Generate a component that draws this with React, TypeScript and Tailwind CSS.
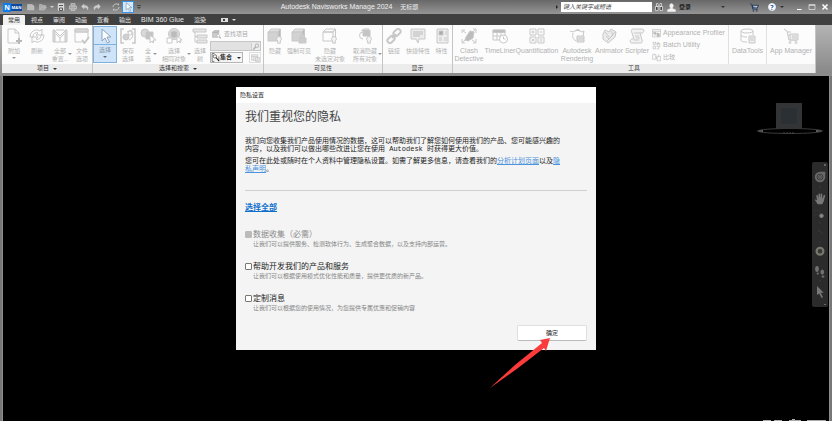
import React, { useState } from 'react';

type Glyph = React.ReactNode;

function Icon({ children, className = 'size-4' }: { children: Glyph; className?: string }) {
  return (
    <svg viewBox="0 0 16 16" className={`shrink-0 ${className}`} fill="none" stroke="currentColor" strokeWidth="1" aria-hidden="true">
      {children}
    </svg>
  );
}

const bulb = <path d="M12 8.5a2.4 2.4 0 0 1 1.3 4.4v2.3h-2.6v-2.3A2.4 2.4 0 0 1 12 8.5z" fill="#f4f4f4" />;
const cube = (
  <>
    <path d="M1 4l3-3h9.500l-2.500 3z" fill="#e2e2e2" />
    <path d="M11 4l2.500-3v8.500L11 13z" fill="#b8b8b8" />
    <path d="M1 4h10v9H1z" fill="#d2d2d2" />
  </>
);

const glyphs = {
  append: <><path d="M2 1h7l4 4v10H2zM9 1v4h4" /><path d="M13 10v6M10 13h6" strokeWidth="2" stroke="#b8b8b8" /></>,
  refresh: <><path d="M1 9C1 4 6 0 11 3l2-2v6H7l2-2C6 4 4 6 4 9z" /><path d="M15 7c0 5-5 9-10 6l-2 2V9h6l-2 2c3 1 5-1 5-4z" /></>,
  reset: <><path d="M1 2h2v12H1zM13 2h2v12h-2z" fill="#ddd" /><path d="M3 3l5 5 5-5M4 6l4 4 4-4M4 2h8M3 14h10" /><path d="M8 10v4" /></>,
  fileOptions: <><path d="M1 1h13v9M8 14H1V1M1 4h13" /><path d="M1 1h13v3H1z" fill="#d8d8d8" /><path d="M8 12l2.500 3L15 9" strokeWidth="2" /></>,
  cursor: <path d="M5 1v12l3-3 2.500 5 2-1-2.500-5h4z" fill="#f8fbff" />,
  saveSelection: <><path d="M4 1H1v14h3M12 1h3v14h-3" strokeWidth="1.500" /><circle cx="6" cy="9" r="3" fill="#d0d0d0" /><path d="M7 4l4-2 2 3-1 5-3 2" /><circle cx="10" cy="5" r="2" /></>,
  selectAll: <><circle cx="5" cy="5" r="4" fill="#d8d8d8" /><path d="M6 4h7v7H6z" fill="#c4c4c4" /><path d="M10 7v8l2-2 1 2 1-1-1-2h3z" fill="#fff" /></>,
  selectSame: <><circle cx="8" cy="6" r="5.500" fill="#ddd" /><path d="M5 4l3-1 3 1v4l-3 2-3-2z" fill="#bbb" /><path d="M1 10h5v5H1zM11 8v7l2-2 1 2 1-1-1-2h2z" fill="#fff" /></>,
  tree: <><path d="M1 1h13v3H1zM5 7h10v3H5zM5 12h10v3H5z" fill="#e6e6e6" /><path d="M3 4v10h2M3 8.500h2" /></>,
  find: <><path d="M1 4l3-3h8l-2 3zM1 4h9v9H1zM10 4l2-3v7" fill="#ccc" /><circle cx="11" cy="10" r="2.500" fill="#fff" /><path d="M13 12l3 3" strokeWidth="2" /></>,
  hide: <>{cube}{bulb}</>,
  require: <>{cube}<path d="M8 10h7v5H8zM9.500 10V8a2 2 0 0 1 4 0v2" fill="#ccc" /></>,
  hideUnselected: <><path d="M1 4l3-3h9.500l-2.500 3zM1 4h10v9H1zM11 4l2.500-3v8" />{bulb}</>,
  unhide: <><path d="M6 11a3.500 3.500 0 1 1 0-7" /><path d="M6 2h7v6H6z" fill="#c4c4c4" /><path d="M4 3l3-2h5" />{bulb}</>,
  link: <g strokeWidth="2"><rect x="7" y="2" width="8" height="5" rx="2.500" transform="rotate(-45 11 4.500)" /><rect x="1" y="9" width="8" height="5" rx="2.500" transform="rotate(-45 5 11.500)" /><path d="M6 10l4-4" /></g>,
  quick: <><path d="M1 1h14v10H9l-1 4-2-4H1z" fill="#ececec" /><path d="M3 4h10M3 6h10M3 8h7" stroke="#bbb" /></>,
  properties: <><path d="M3 1h11v14H3z" fill="#eee" /><path d="M5 3h4v4H5z" fill="#aaa" /><path d="M11 4h2M11 6h2M5 10h3M5 12h3M10 10h3M10 12h3" /></>,
  clash: <><path d="M5 9l4-6 4 1-1 6-5 3-3-1z" fill="#bcbcbc" /><path d="M1 5V2h3M1 11v4h3M15 5V1h-3M15 11v4h-3M2 3l3 2M2 14l3-3M14 14l-3-2M14 2l-2 2" /></>,
  timeline: <><path d="M1 2h12v10H1zM1 8h12M5 4v8M9 4v8" /><path d="M1 2h12v2.500H1z" fill="#bbb" /><circle cx="11.500" cy="11" r="4" fill="#fff" /><path d="M11.500 8.500V11h2" /></>,
  quantity: <><path d="M1 1h6v6H1zM9 1h6v6H9zM1 9h6v6H1zM9 9h6v6H9z" /><path d="M2.500 4h3M4 2.500v3M10.500 4h3M2.500 10.500l3 3M5.500 10.500l-3 3M10.500 11h3M10.500 13h3" /></>,
  rendering: <><path d="M1 3l3 1c3-2 6-2 9 0l2-1-1 5M4 5c-1 4 0 6 3 8" /><path d="M6 3c2-2 4-2 5 0" fill="#ccc" /><path d="M8 8h7v6H8z" fill="#e8e8e8" /><path d="M8 10h7M8 12h7" /></>,
  animator: <><path d="M2 6l2-4 4 2 2-3 5 3-1 5-7 6-5-4z" fill="#ececec" /><path d="M5 8l3 3 6-7M4 4l4 5M10 3l2 4M6 13l6-6" /></>,
  scripter: <><path d="M4 1h9c3 0 2 4 0 4h-2l2 7c1 3-1 3-2 3H3c-3 0-2-4 0-4h2L3 5c-1-2-1-4 1-4z" fill="#f2f2f2" /><path d="M5 5h6M6 8h4M7 10h4M5 12h5" /></>,
  dataTools: <><ellipse cx="7" cy="3" rx="6" ry="2" /><path d="M1 3v9c0 2 4 2 6 2M13 3v4M1 7c1 2 4 2 6 2" /><path d="M9 8h6v7H9z" fill="#eee" /><path d="M10 10h4M10 12h4" /></>,
  appManager: <><path d="M1 1l3 2 2 9h8M4 4h4M5 7h3" /><path d="M7 6h8v6H7z" fill="#eee" /><path d="M9 8h5M9 10h5" /><circle cx="7" cy="14.500" r="1" /><circle cx="13" cy="14.500" r="1" /></>,
  profiler: <><path d="M1 1h14v13H1zM1 4h14" /><path d="M3 6h4v3H3zM9 8h4v5H9z" fill="#bbb" /><path d="M4 12l7-6" /></>,
  batch: <><path d="M2 2h4v4H2zM2 9h4v5H2zM9 5h5v5H9zM6 4h6M12 10v4H8" /><path d="M10 2l3 2-3 2" /></>,
  compare: <><path d="M1 3h6v8H1zM9 6h6v8H9z" /><path d="M4 1v2M12 2v4M6 6l4 5" /></>,
};

type ToolDef = { icon: keyof typeof glyphs; lines: string[]; width: string; menu?: boolean };

const projectTools: ToolDef[] = [
  { icon: 'append', lines: ['附加'], width: 'w-6', menu: true },
  { icon: 'refresh', lines: ['刷新'], width: 'w-[22px]' },
  { icon: 'reset', lines: ['全部', '重置...'], width: 'w-6', menu: true },
  { icon: 'fileOptions', lines: ['文件', '选项'], width: 'w-5' },
];

const selectTools: ToolDef[] = [
  { icon: 'saveSelection', lines: ['保存', '选择'], width: 'w-[22px]' },
  { icon: 'selectAll', lines: ['全', '选'], width: 'w-[18px]', menu: true },
  { icon: 'selectSame', lines: ['选择', '相同对象'], width: 'w-[34px]', menu: true },
  { icon: 'tree', lines: ['选择', '树'], width: 'w-[18px]' },
];

const visibilityTools: ToolDef[] = [
  { icon: 'hide', lines: ['隐藏'], width: 'w-[22px]' },
  { icon: 'require', lines: ['强制可见'], width: 'w-[26px]' },
  { icon: 'hideUnselected', lines: ['隐藏', '未选定对象'], width: 'w-9' },
  { icon: 'unhide', lines: ['取消隐藏', '所有对象'], width: 'w-[34px]', menu: true },
];

const displayTools: ToolDef[] = [
  { icon: 'link', lines: ['链接'], width: 'w-[22px]' },
  { icon: 'quick', lines: ['快捷特性'], width: 'w-[26px]' },
  { icon: 'properties', lines: ['特性'], width: 'w-[21px]' },
];

const mainTools: ToolDef[] = [
  { icon: 'clash', lines: ['Clash', 'Detective'], width: 'w-8' },
  { icon: 'timeline', lines: ['TimeLiner'], width: 'w-[30px]' },
  { icon: 'quantity', lines: ['Quantification'], width: 'w-11' },
  { icon: 'rendering', lines: ['Autodesk', 'Rendering'], width: 'w-9' },
  { icon: 'animator', lines: ['Animator'], width: 'w-7' },
  { icon: 'scripter', lines: ['Scripter'], width: 'w-7' },
];

const tabs = ['常用', '视点', '审阅', '动画', '查看', '输出', 'BIM 360 Glue', '渲染'];

// Latin captions are set one pixel larger than the Chinese ones
const latin = "font-['Liberation_Sans',sans-serif] text-[7px]";
const isLatin = (text: string) => /^[A-Z]/.test(text);

function Tool({ icon, lines, width, menu }: ToolDef) {
  return (
    <button className={`relative flex shrink-0 flex-col items-center pt-[3px] text-[#c8c8c8] ${width}`}>
      <Icon>{glyphs[icon]}</Icon>
      <span className="mt-[3px] flex flex-col items-center whitespace-nowrap leading-[8px] text-[#b2b2b2]">
        {lines.map((line) => (
          <span key={line} className={isLatin(line) ? latin : ''}>{line}</span>
        ))}
      </span>
      {menu && lines.length === 1 && <Caret className="mt-[2px] border-t-[#999]" />}
      {menu && lines.length > 1 && <Caret className="absolute right-0 top-7 border-t-[#999]" />}
    </button>
  );
}

function Caret({ className = '' }: { className?: string }) {
  return <span className={`size-0 border-x-2 border-t-2 border-x-transparent ${className}`} />;
}

function Panel({ title, menu, children }: { title: string; menu?: boolean; children: React.ReactNode }) {
  return (
    <section className="flex shrink-0 flex-col border-r border-[#c4c4c4] bg-[#fcfcfc]">
      <div className="flex h-[39px]">{children}</div>
      <h2 className="flex h-[9px] items-center justify-center gap-1 bg-[#ececec] leading-[9px] text-[#333]">
        {title}
        {menu && <Caret className="border-t-[#333]" />}
      </h2>
    </section>
  );
}

function TitleBar() {
  return (
    <header className="flex h-[14px] items-center bg-linear-to-b from-[#686868] to-[#959595] pl-[3px] pr-[3px] text-[#efefef]">
      <div className="flex h-[9px] items-center text-[6px] font-bold leading-[9px] text-white">
        <span className="flex h-[9px] w-2 items-center justify-center bg-[#0a7cf0] text-[7px]">N</span>
        <span className="flex h-[7px] w-[11px] items-center justify-center bg-[#0b4a9c] text-[4px]">MAN</span>
      </div>
      <div className="ml-[3px] flex items-center text-[#c6c6c6]">
        <button aria-label="新建" className="flex w-3 justify-center"><Icon className="size-2"><path d="M1 3h9l4 3v8H1z" fill="#bbb" /></Icon></button>
        <button aria-label="打开" className="flex w-3 justify-center"><Icon className="size-2"><path d="M1 14V3h5l2 2h5v3M1 14l4-6h10l-4 6z" fill="#aaa" /></Icon></button>
        <Caret className="mx-px border-t-[#ccc]" />
        <button aria-label="保存" className="flex w-3 justify-center"><Icon className="size-2"><path d="M2 1h12v14H2z" fill="#ddd" /><path d="M4 5h8M5 10h6v5H5z" stroke="#555" strokeWidth="2" /></Icon></button>
        <button aria-label="打印" className="flex w-3 justify-center"><Icon className="size-2"><path d="M4 1h8v5H4zM1 6h14v6H1zM4 10h8v5H4z" fill="#999" strokeWidth="1.500" /></Icon></button>
        <button aria-label="撤消" className="flex w-3 justify-center"><Icon className="size-2"><path d="M6 2L1 7l5 5V9c4 0 7 1 7 5 3-6 0-9-7-9z" fill="#ccc" /></Icon></button>
        <button aria-label="重做" className="flex w-3 justify-center"><Icon className="size-2"><path d="M10 2l5 5-5 5V9c-4 0-7 1-7 5-3-6 0-9 7-9z" fill="#ccc" /></Icon></button>
        <button aria-label="刷新" className="ml-[7px] flex w-3 justify-center"><Icon className="size-2"><path d="M2 8c0-6 8-8 11-4V1M14 8c0 6-8 8-11 4v3" strokeWidth="2" /></Icon></button>
        <button aria-label="选择" className="flex h-3 w-3 items-center justify-center border border-[#3d8fe0] bg-[#d5e9fb] text-[#7590ad]"><Icon className="size-[10px]">{glyphs.cursor}</Icon></button>
        <button aria-label="自定义" className="ml-px flex w-2 flex-col items-center gap-px"><span className="h-px w-1 bg-[#444]" /><Caret className="border-t-[#444]" /></button>
      </div>
      <h1 className="flex flex-1 items-center justify-center gap-2 whitespace-nowrap">
        <span className={latin}>Autodesk Navisworks Manage 2024</span>
        <span>无标题</span>
      </h1>
      <span className="mr-[3px] size-0 border-y-2 border-l-2 border-y-transparent border-l-[#222]" />
      <input aria-label="搜索" placeholder="键入关键字或短语" className="h-[10px] w-[91px] bg-white px-[2px] text-[6px] italic text-black placeholder:text-[#444]" />
      <button aria-label="查找" className="ml-[3px] text-[#e8e8e8]"><Icon className="size-2"><path d="M3 1h3v6H3zM10 1h3v6h-3zM1 7h5v8H1zM10 7h5v8h-5zM6 6h4" fill="#444" strokeWidth="1.500" /></Icon></button>
      <button className="ml-1 flex items-center gap-[3px] font-bold text-[#222]">
        <Icon className="size-[9px]"><path d="M8 1a3.500 4 0 0 1 2 7v2l5 2v3H1v-3l5-2V8a3.500 4 0 0 1 2-7z" fill="#f2f2f2" stroke="#eee" /></Icon>
        登录
      </button>
      <Caret className="ml-[30px] border-t-[#333]" />
      <button aria-label="商店" className="ml-[25px] text-[#1e3150]"><Icon className="size-[9px]"><path d="M0 2h3l2 9h9M4 4h11l-2 5H5z" fill="#aebfda" strokeWidth="1.500" /><circle cx="6" cy="14" r="1" /><circle cx="12" cy="14" r="1" /></Icon></button>
      <button aria-label="帮助" className="ml-[9px] flex size-2 items-center justify-center rounded-full border border-[#dfe8f5] bg-white text-[7px] font-bold leading-none text-[#2459a8]">?</button>
      <Caret className="ml-1 border-t-[#333]" />
      <button aria-label="最小化" className="ml-[11px] text-white"><Icon className="size-2"><path d="M4 13h9" strokeWidth="2" /></Icon></button>
      <button aria-label="最大化" className="ml-[5px] text-[#ddd]"><Icon className="size-2"><path d="M2 3h12v10H2zM2 5h12" strokeWidth="1.500" /></Icon></button>
      <button aria-label="关闭" className="ml-[5px] text-white"><Icon className="size-2"><path d="M3 3l10 10M13 3L3 13" strokeWidth="3" /></Icon></button>
    </header>
  );
}

function Ribbon() {
  return (
    <div className="flex border-b-[3px] border-[#8b8b8b] bg-linear-to-b from-[#b4b4b4] to-[#898989] pl-[2px]">
      <Panel title="项目" menu>
        {projectTools.map((tool) => <Tool key={tool.icon} {...tool} />)}
      </Panel>
      <Panel title="选择和搜索" menu>
        <button className="my-px flex w-6 shrink-0 flex-col items-center border border-[#7fb1de] bg-[#cfe4f8] text-[#8fa4ba]">
          <span className="flex h-[18px] w-full items-center justify-center border-b border-[#7fb1de]"><Icon>{glyphs.cursor}</Icon></span>
          <span className="mt-px leading-[8px] text-[#8796a6]">选择</span>
          <Caret className="mt-[2px] border-t-[#667]" />
        </button>
        {selectTools.map((tool) => <Tool key={tool.icon} {...tool} />)}
        <div className="flex w-[54px] flex-col gap-px pl-px pr-[2px] pt-[3px]">
          <button className="flex h-3 items-center gap-[3px] pl-[2px] text-[#aaa]">
            <Icon className="size-[9px]">{glyphs.find}</Icon>
            查找项目
          </button>
          <div className="flex h-[10px] items-center border border-[#c6c6c6] bg-[#e2e2e2] text-[#aaa]">
            <input aria-label="快速查找" className="h-2 min-w-0 flex-1" />
            <button aria-label="查找" className="flex w-[9px] justify-center border-l border-[#ccc] bg-[#ededed]"><Icon className="size-[7px]"><circle cx="9" cy="6" r="4" strokeWidth="2" /><path d="M6 9l-5 6" strokeWidth="3" /></Icon></button>
          </div>
          <div className="flex h-[11px] justify-between">
            <button className="flex w-[33px] items-center border border-[#b5b5b5] bg-[#f5f5f5] font-bold text-[#222]">
              <Icon className="size-[9px]"><path d="M2 1v14M2 1h4M2 15h4M14 15V6" /><circle cx="7" cy="6" r="3" /><path d="M9 8l5 6" strokeWidth="2" /></Icon>
              集合
              <Caret className="ml-auto mr-px border-t-[#222]" />
            </button>
            <button aria-label="管理集" className="flex w-3 items-center justify-center border border-[#ddd] text-[#bbb]"><Icon className="size-[9px]"><path d="M1 3h11v10H1zM1 6h11M5 6v7M8 8h7v7H8z" fill="#eee" /></Icon></button>
          </div>
        </div>
      </Panel>
      <Panel title="可见性">
        {visibilityTools.map((tool) => <Tool key={tool.icon} {...tool} />)}
      </Panel>
      <Panel title="显示">
        {displayTools.map((tool) => <Tool key={tool.icon} {...tool} />)}
      </Panel>
      <Panel title="工具">
        {mainTools.map((tool) => <Tool key={tool.icon} {...tool} />)}
        <div className="flex w-[77px] flex-col pl-px pt-[2px] leading-[12px] text-[#b2b2b2]">
          <button className={`flex h-3 items-center gap-[2px] whitespace-nowrap ${latin}`}><Icon className="size-[9px]">{glyphs.profiler}</Icon>Appearance Profiler</button>
          <button className={`flex h-3 items-center gap-[2px] whitespace-nowrap ${latin}`}><Icon className="size-[9px]">{glyphs.batch}</Icon>Batch Utility</button>
          <button className="flex h-3 items-center gap-[2px] whitespace-nowrap"><Icon className="size-[9px]">{glyphs.compare}</Icon>比较</button>
        </div>
        <div className="flex border-x border-[#e0e0e0]"><Tool icon="dataTools" lines={['DataTools']} width="w-[37px]" /></div>
        <Tool icon="appManager" lines={['App Manager']} width="w-12" />
      </Panel>
    </div>
  );
}

const options = [
  { id: 'collect', label: '数据收集（必需）', note: '让我们可以提供服务、检测软体行为、生成聚合数据，以及支持内部运营。', required: true },
  { id: 'develop', label: '帮助开发我们的产品和服务', note: '让我们可以根据使用模式优化性能和质量，提供更优质的新产品。', required: false },
  { id: 'custom', label: '定制消息', note: '让我们可以根据您的使用情况，为您提供专属优惠和促销内容', required: false },
];

function PrivacyDialog() {
  const [checked, setChecked] = useState<Record<string, boolean>>({ collect: true });

  return (
    <div role="dialog" aria-labelledby="privacy-title" className="relative mt-[11px] w-[360px] self-start bg-[#f4f4f4] text-[#1c1c1c]">
      <div id="privacy-title" className="h-4 bg-white px-1 leading-4">隐私设置</div>
      <div className="px-[9px] pb-[9px] pt-[6px]">
        <h2 className="text-[12px] leading-4 text-[#444]">我们重视您的隐私</h2>
        <div className="mt-3 flex flex-col gap-1 whitespace-nowrap font-['Liberation_Mono','Noto_Sans_CJK_SC',monospace] text-[7px] leading-[8px]">
          <p>
            我们向您收集我们产品使用情况的数据，这可以帮助我们了解您如何使用我们的产品、您可能感兴趣的<br />
            内容，以及我们可以做出哪些改进让您在使用 Autodesk 时获得更大价值。
          </p>
          <p>
            您可在此处或随时在个人资料中管理隐私设置。如需了解更多信息，请查看我们的
            <a href="#program" className="text-[#4b93dc] underline">分析计划页面</a>以及
            <a href="#privacy" className="text-[#4b93dc] underline">隐<br />私声明</a>。
          </p>
        </div>
        <hr className="mt-[17px] border-[#cfcfcf]" />
        <button
          onClick={() => setChecked({ collect: true, develop: true, custom: true })}
          className="mt-[10px] block text-[8px] font-bold leading-3 text-[#0e70cc] underline"
        >
          选择全部
        </button>
        <div className="mt-4 flex flex-col gap-3">
          {options.map(({ id, label, note, required }) => (
            <div key={id} className="grid grid-cols-[7px_1fr] items-center gap-x-px">
              <input
                id={id}
                type="checkbox"
                disabled={required}
                checked={!!checked[id]}
                onChange={(e) => setChecked({ ...checked, [id]: e.target.checked })}
                className={`size-[7px] appearance-none rounded-[1px] border ${required ? 'border-[#bbb] bg-[#bbb]' : 'border-[#777] bg-white checked:bg-[#0e70cc]'}`}
              />
              <label htmlFor={id} className={`text-[8px] leading-[10px] ${required ? 'text-[#8b8b8b]' : ''}`}>{label}</label>
              <p className="col-start-2 leading-[10px] text-[#858585]">{note}</p>
            </div>
          ))}
        </div>
        <button className="ml-auto mt-3 block h-4 w-[70px] rounded-[2px] border border-b-[#bbb] border-[#dedede] bg-white leading-[14px]">确定</button>
      </div>
      <svg viewBox="0 0 60 50" className="pointer-events-none absolute left-[254px] top-[251px] h-[50px] w-[60px]" aria-hidden="true">
        <path d="M60 0L50 2l2 3L25 27 0 50l28-20 26-20 2 3z" fill="#fb3b3b" />
      </svg>
    </div>
  );
}

function ViewCube() {
  return (
    <svg viewBox="0 0 68 32" className="absolute right-[5px] top-[27px] h-8 w-[68px]" aria-hidden="true">
      <ellipse cx="34" cy="28" rx="32" ry="2.500" fill="none" stroke="#3c3c3c" />
      <path d="M0 28l7-1v2zM68 28l-8-1v2z" fill="#666" />
      <path d="M20 0h26v26H20z" fill="#333435" />
      <path d="M25 5h16v16H25z" fill="#2b3035" />
      <path d="M27 30h12" stroke="#444" strokeDasharray="2 1" />
    </svg>
  );
}

function NavigationBar() {
  return (
    <nav aria-label="导航栏" className="absolute right-px top-[86px] flex h-[145px] w-4 flex-col items-center rounded-[2px] bg-[#2b2b2b] pt-[9px] text-[#777]">
      <button aria-label="控制盘"><Icon className="block size-3"><path d="M8 1h7v7a7 7 0 1 1-7-7z" fill="#686868" stroke="none" /><circle cx="8" cy="8" r="4" stroke="#333" /><circle cx="8" cy="8" r="2" stroke="#444" /></Icon></button>
      <button aria-label="平移" className="mt-[10px]"><Icon className="block size-3"><path d="M5 15L1 9q1-1 3 1L3 3q1-1 2 0l1 4V1q1-1 2 0v6l1-6q1-1 2 0v7l2-5q1-1 2 0l-2 8-2 4z" fill="#777" stroke="none" /></Icon></button>
      <button aria-label="缩放" className="mt-1"><Icon className="block size-3"><path d="M1 2h7v7H1z" stroke="#383838" strokeDasharray="2 1" /><circle cx="10" cy="9" r="2.500" fill="#888" /></Icon></button>
      <button aria-label="动态观察" className="mt-[25px]"><Icon className="block size-3"><circle cx="8" cy="7" r="4.500" stroke="#77776b" strokeWidth="3" /><circle cx="8" cy="7" r="2" fill="#333" stroke="#444" /></Icon></button>
      <button aria-label="漫游" className="mt-2"><Icon className="block size-3"><g fill="#707070" stroke="none"><ellipse cx="4" cy="4" rx="2.500" ry="4" /><ellipse cx="5" cy="10" rx="1.500" ry="1.500" /><ellipse cx="11" cy="8" rx="2.500" ry="3.500" /><ellipse cx="12" cy="14" rx="2" ry="1.500" /></g></Icon></button>
      <button aria-label="选择" className="mt-2"><Icon className="block size-3"><path d="M4 0v12l3-2 3 6 2-1-3-6h4z" fill="#777" stroke="none" /></Icon></button>
      <svg viewBox="0 0 16 145" className="pointer-events-none absolute inset-0" fill="none" stroke="#666" aria-hidden="true">
        <path d="M12 2l2 2M14 2l-2 2M12 142l1 1 1-1" />
        <path d="M7 25h2M7 61h2M7 80h2M7 119h2M6 68l5 4" stroke="#3b3b3b" />
      </svg>
    </nav>
  );
}

export default function App() {
  return (
    <div lang="zh-CN" className="flex min-h-screen flex-col overflow-hidden bg-[#777] font-['Open_Sans','Noto_Sans_CJK_SC',sans-serif] text-[6px]">
      <TitleBar />
      <nav className="flex h-[11px] items-end bg-[#404040] pl-[3px] text-[#e6e6e6]">
        {tabs.map((tab, i) => (
          <button key={tab} className={`h-[10px] whitespace-nowrap px-[5px] leading-[10px] ${i === 0 ? 'mr-px rounded-t-[1px] bg-[#f2f2f2] text-[#333]' : ''} ${isLatin(tab) ? latin : ''}`}>
            {tab}
          </button>
        ))}
        <button aria-label="显示选项" className="ml-[10px] flex h-[10px] items-center gap-1">
          <span className="flex h-1 w-[7px] items-center justify-center bg-[#ddd]"><span className="size-[2px] bg-[#444]" /></span>
          <Caret className="border-t-[#ddd]" />
        </button>
      </nav>
      <Ribbon />
      <main className="relative mx-[2px] flex flex-1 justify-center border-x border-[#8f8f8f] bg-black">
        <PrivacyDialog />
        <ViewCube />
        <NavigationBar />
        <svg viewBox="0 0 64 3" className="absolute bottom-0 right-[2px] h-[3px] w-16" fill="#aaa" aria-hidden="true">
          <path d="M0 2h8v1H0zM11 2h8v1h-8zM26 2h3V1h3v1h6v1H26zM44 2h19v1H44z" />
        </svg>
      </main>
    </div>
  );
}
